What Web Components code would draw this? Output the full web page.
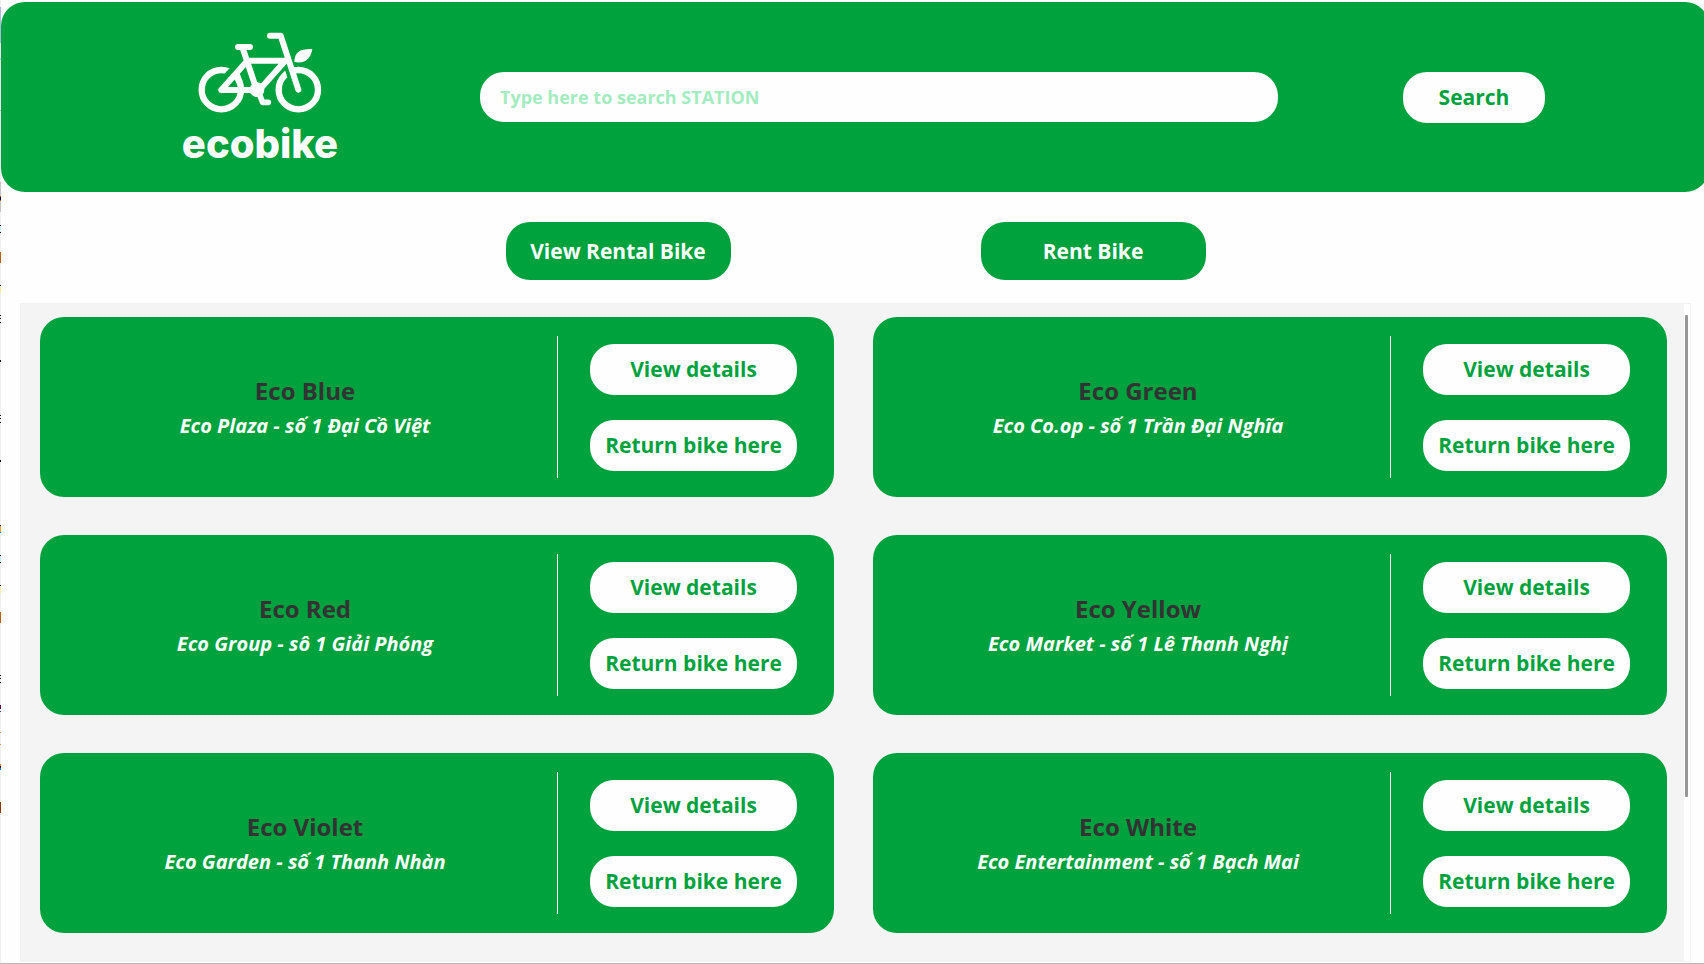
<!DOCTYPE html>
<html lang="en">
<head>
<meta charset="utf-8">
<meta name="viewport" content="width=device-width, initial-scale=1">
<title>ecobike</title>
<style>
  :root {
    --green: #00a23e;
    --paper: #fefefe;
    --panel: #f4f4f4;
    --ink: #333333;
    --hint: #a3ecbf;
  }
  body {
    margin: 0;
    background: #fefefe;
    font-family: "Open Sans", "Noto Sans", sans-serif;
  }
</style>
</head>
<body>
<eco-app></eco-app>

<script>
const define = (name, html, setup) => {
  const template = document.createElement('template');
  template.innerHTML = html;
  customElements.define(name, class extends HTMLElement {
    constructor() {
      super();
      this.attachShadow({ mode: 'open' }).append(template.content.cloneNode(true));
    }
    connectedCallback() {
      if (setup) setup(this, this.shadowRoot);
    }
  });
};

/* Pill button; "solid" is white on green, default is green on white */
define('eco-button', `
  <style>
    :host { display: block; }
    button {
      display: block;
      width: 100%;
      height: 51px;
      padding: 0;
      border: 0;
      border-radius: 24px;
      background: var(--paper);
      color: var(--green);
      font: 700 21px/30px "Open Sans", "Noto Sans", sans-serif;
      white-space: nowrap;
      cursor: pointer;
    }
    :host([solid]) button { height: 58px; background: var(--green); color: var(--paper); }
  </style>
  <button type="button"><slot></slot></button>
`);

define('eco-logo', `
  <style>
    :host { display: flex; flex-direction: column; align-items: center; gap: 13px; width: 160px; padding-bottom: 4px; color: var(--paper); }
    svg { display: block; width: 160px; height: 85px; }
    span { font: 800 40px/32px Inter, sans-serif; }
  </style>
  <svg viewBox="60 30 480 255" fill="none" stroke="currentColor" stroke-linecap="round" stroke-linejoin="round" aria-hidden="true">
    <circle cx="184" cy="209" r="59" stroke-width="19"/>
    <circle cx="415" cy="209" r="59" stroke-width="19"/>
    <path d="M204 172L250 122" stroke="var(--green)" stroke-width="30" stroke-linecap="butt"/>
    <path d="M380 125L396 172" stroke="var(--green)" stroke-width="26" stroke-linecap="butt"/>
    <path d="M184 210L262 122H376L295 213M184 210H290L248 84M231 164L240 190" stroke-width="18"/>
    <path d="M234 81H270M330 47H362L415 209" stroke-width="18"/>
    <circle cx="291" cy="209" r="20" fill="currentColor" stroke-width="4"/>
    <path d="M298 222L308 247H325" stroke-width="17"/>
    <path d="M403 126C403 96 420 86 457 87C452 115 437 132 403 126Z" fill="currentColor" stroke="none"/>
  </svg>
  <span>ecobike</span>
`);

define('eco-header', `
  <style>
    :host { display: block; }
    header {
      display: flex;
      align-items: center;
      height: 190px;
      margin: 2px -5px 0 0;
      padding: 0 164px 0 179px;
      box-sizing: border-box;
      border-radius: 24px;
      background: var(--green);
    }
    form { display: flex; flex: 1; align-items: center; gap: 125px; margin-left: 140px; }
    input {
      flex: 1;
      min-width: 0;
      height: 50px;
      box-sizing: border-box;
      padding: 0 20px;
      border: 0;
      border-radius: 24px;
      background: var(--paper);
      color: var(--green);
      font: 700 18px/26px "Open Sans", "Noto Sans", sans-serif;
    }
    input::placeholder { color: var(--hint); opacity: 1; }
    eco-button { width: 142px; }
  </style>
  <header>
    <eco-logo></eco-logo>
    <form role="search">
      <input type="text" aria-label="Search station" placeholder="Type here to search STATION">
      <eco-button>Search</eco-button>
    </form>
  </header>
`);

define('station-card', `
  <style>
    :host { display: block; }
    article {
      display: flex;
      align-items: center;
      height: 180px;
      box-sizing: border-box;
      padding: 0 37px 0 13px;
      border-radius: 24px;
      background: var(--green);
    }
    .info { flex: 1; min-width: 0; padding-top: 2px; text-align: center; }
    h2 { margin: 0; color: var(--ink); font-size: 24px; font-weight: 700; line-height: 36px; }
    p { margin: 0; color: var(--paper); font-size: 20px; font-style: italic; font-weight: 700; line-height: 34px; }
    .rule { width: 1px; height: 142px; background: var(--paper); }
    .actions { display: grid; gap: 25px; width: 207px; margin-left: 32px; }
  </style>
  <article>
    <div class="info">
      <h2><slot></slot></h2>
      <p><slot name="address"></slot></p>
    </div>
    <div class="rule"></div>
    <div class="actions">
      <eco-button>View details</eco-button>
      <eco-button>Return bike here</eco-button>
    </div>
  </article>
`);

define('station-list', `
  <style>
    :host {
      display: flex;
      min-height: 0;
      box-sizing: border-box;
      border: 1px solid #f2f2f2;
      background: var(--panel);
      overflow: hidden;
    }
    .cards {
      flex: 1;
      display: grid;
      grid-template-columns: 1fr 1fr;
      gap: 38px 39px;
      align-content: start;
      padding: 13px 17px 0 19px;
    }
    .track { width: 6px; padding: 11px 0 3px; box-sizing: border-box; background: var(--paper); }
    .thumb { width: 3px; height: 75%; margin: 0 2px 0 1px; background: #969696; border-radius: 1px; }
  </style>
  <div class="cards"><slot></slot></div>
  <div class="track"><div class="thumb"></div></div>
`);

/* One-pixel sliver of whatever lies behind the window's left edge */
define('window-edge', `
  <style>:host { display: block; background: #efefef; }</style>
`, (host) => {
  const marks = [
    [7, 43, '#a9b9d8'], [58, 60, '#8fd8f4'], [110, 111, '#bbbbbb'], [182, 196, '#c4c4c4'],
    [196, 197, '#b06000'], [197, 200, '#10004a'], [200, 201, '#b06000'], [201, 212, '#c4c4c4'],
    [225, 226, '#111111'], [227, 231, '#bfeeee'], [232, 233, '#111111'], [252, 263, '#b86200'],
    [285, 286, '#111111'], [287, 293, '#f3eb9a'], [315, 316, '#111111'], [318, 319, '#111111'],
    [322, 323, '#111111'], [360, 362, '#111111'], [415, 416, '#111111'], [418, 419, '#111111'],
    [422, 423, '#111111'], [460, 462, '#111111'], [525, 526, '#111111'], [526, 532, '#e8a040'],
    [532, 533, '#2080d0'], [555, 556, '#111111'], [557, 561, '#bfeeee'], [562, 563, '#111111'],
    [585, 586, '#111111'], [587, 593, '#f3eb9a'], [612, 623, '#b86200'], [675, 676, '#111111'],
    [678, 679, '#111111'], [682, 683, '#111111'], [705, 709, '#5a0030'], [711, 712, '#303070'],
    [732, 733, '#e09040'], [744, 745, '#e09040'], [764, 766, '#e09040'], [766, 768, '#301030'],
    [768, 770, '#2080d0'], [802, 813, '#8a3400']
  ];
  const stops = marks.map(([from, to, color]) =>
    `transparent ${from}px, ${color} ${from}px, ${color} ${to}px, transparent ${to}px`);
  host.style.backgroundImage = `linear-gradient(${stops.join(', ')})`;
});

define('eco-app', `
  <style>
    :host {
      display: grid;
      grid-template-columns: 1px minmax(0, 1fr);
      height: 100vh;
      box-sizing: border-box;
      border-bottom: 1px solid #b8b8b8;
      overflow: hidden;
    }
    main { display: flex; flex-direction: column; min-height: 0; }
    nav { display: flex; justify-content: center; gap: 250px; padding: 30px 0 23px 6px; }
    nav eco-button { width: 225px; }
    station-list { flex: 1; margin: 0 13px 1px 19px; }
  </style>
  <window-edge></window-edge>
  <main>
    <eco-header></eco-header>
    <nav>
      <eco-button solid>View Rental Bike</eco-button>
      <eco-button solid>Rent Bike</eco-button>
    </nav>
    <station-list>
      <station-card>Eco Blue<span slot="address">Eco Plaza - số 1 Đại Cồ Việt</span></station-card>
      <station-card>Eco Green<span slot="address">Eco Co.op - số 1 Trần Đại Nghĩa</span></station-card>
      <station-card>Eco Red<span slot="address">Eco Group - sô 1 Giải Phóng</span></station-card>
      <station-card>Eco Yellow<span slot="address">Eco Market - số 1 Lê Thanh Nghị</span></station-card>
      <station-card>Eco Violet<span slot="address">Eco Garden - số 1 Thanh Nhàn</span></station-card>
      <station-card>Eco White<span slot="address">Eco Entertainment - số 1 Bạch Mai</span></station-card>
    </station-list>
  </main>
`);
</script>
</body>
</html>
